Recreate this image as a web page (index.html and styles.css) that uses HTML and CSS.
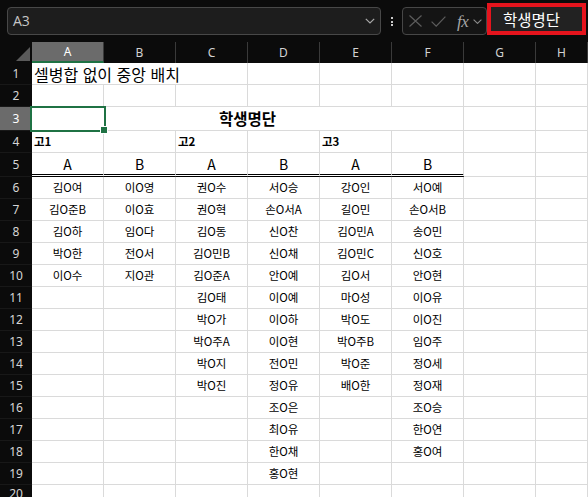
FILE: index.html
```html
<!DOCTYPE html>
<html lang="ko">
<head>
<meta charset="utf-8">
<title>학생명단</title>
<link rel="stylesheet" href="styles.css">
</head>
<body>
<div class="app">
  <div class="fbar">
    <div class="namebox">
      <span class="ref">A3</span>
      <svg class="chev" width="10" height="6" viewBox="0 0 10 6"><path d="M0.8 0.8L5 5 9.2 0.8" fill="none" stroke="#a9a9a9" stroke-width="1.2"/></svg>
    </div>
    <div class="kebab"><i></i><i></i><i></i></div>
    <div class="fxbox">
      <svg class="ic-x" width="13" height="12" viewBox="0 0 13 12"><path d="M0.5 0.5L12.5 11.5M12.5 0.5L0.5 11.5" stroke="#5c5c5c" stroke-width="1.2" fill="none"/></svg>
      <svg class="ic-ok" width="15" height="11" viewBox="0 0 15 11"><path d="M0.6 5.6L5.2 10.2 14.4 0.6" stroke="#5c5c5c" stroke-width="1.2" fill="none"/></svg>
      <span class="fx">fx</span>
      <svg class="ic-dd" width="9" height="5" viewBox="0 0 9 5"><path d="M0.6 0.6L4.5 4.4 8.4 0.6" stroke="#8a8a8a" stroke-width="1.1" fill="none"/></svg>
    </div>
    <div class="finput">학생명단</div>
  </div>

  <div class="sheet">
    <div class="row hdr">
      <div class="corner"><svg width="14" height="14" viewBox="0 0 14 14"><path d="M14 0V14H0Z" fill="#5a5a5a"/></svg></div>
      <div class="ch sel">A</div><div class="ch">B</div><div class="ch">C</div><div class="ch">D</div><div class="ch">E</div><div class="ch">F</div><div class="ch">G</div><div class="ch">H</div>
    </div>

    <div class="row">
      <div class="rh">1</div>
      <div class="c note">셀병합 없이 중앙 배치</div><div class="c"></div><div class="c"></div><div class="c"></div><div class="c"></div><div class="c"></div>
    </div>
    <div class="row">
      <div class="rh">2</div>
      <div class="c"></div><div class="c"></div><div class="c"></div><div class="c"></div><div class="c"></div><div class="c"></div><div class="c"></div><div class="c"></div>
    </div>
    <div class="row tall">
      <div class="rh sel">3</div>
      <div class="c title">학생명단</div>
      <div class="selbox"></div>
      <div class="c"></div><div class="c"></div>
    </div>
    <div class="row">
      <div class="rh">4</div>
      <div class="c grade">고1</div><div class="c"></div><div class="c grade">고2</div><div class="c"></div><div class="c grade">고3</div><div class="c"></div><div class="c"></div><div class="c"></div>
    </div>
    <div class="row tall">
      <div class="rh">5</div>
      <div class="c cls dbl">A</div><div class="c cls dbl">B</div><div class="c cls dbl">A</div><div class="c cls dbl">B</div><div class="c cls dbl">A</div><div class="c cls dbl">B</div><div class="c"></div><div class="c"></div>
    </div>

    <div class="row"><div class="rh">6</div><div class="c">김O여</div><div class="c">이O영</div><div class="c">권O수</div><div class="c">서O승</div><div class="c">강O인</div><div class="c">서O예</div><div class="c"></div><div class="c"></div></div>
    <div class="row"><div class="rh">7</div><div class="c">김O준B</div><div class="c">이O효</div><div class="c">권O혁</div><div class="c">손O서A</div><div class="c">길O민</div><div class="c">손O서B</div><div class="c"></div><div class="c"></div></div>
    <div class="row"><div class="rh">8</div><div class="c">김O하</div><div class="c">임O다</div><div class="c">김O동</div><div class="c">신O찬</div><div class="c">김O민A</div><div class="c">송O민</div><div class="c"></div><div class="c"></div></div>
    <div class="row"><div class="rh">9</div><div class="c">박O한</div><div class="c">전O서</div><div class="c">김O민B</div><div class="c">신O채</div><div class="c">김O민C</div><div class="c">신O호</div><div class="c"></div><div class="c"></div></div>
    <div class="row"><div class="rh">10</div><div class="c">이O수</div><div class="c">지O관</div><div class="c">김O준A</div><div class="c">안O예</div><div class="c">김O서</div><div class="c">안O현</div><div class="c"></div><div class="c"></div></div>
    <div class="row"><div class="rh">11</div><div class="c"></div><div class="c"></div><div class="c">김O태</div><div class="c">이O예</div><div class="c">마O성</div><div class="c">이O유</div><div class="c"></div><div class="c"></div></div>
    <div class="row"><div class="rh">12</div><div class="c"></div><div class="c"></div><div class="c">박O가</div><div class="c">이O하</div><div class="c">박O도</div><div class="c">이O진</div><div class="c"></div><div class="c"></div></div>
    <div class="row"><div class="rh">13</div><div class="c"></div><div class="c"></div><div class="c">박O주A</div><div class="c">이O현</div><div class="c">박O주B</div><div class="c">임O주</div><div class="c"></div><div class="c"></div></div>
    <div class="row"><div class="rh">14</div><div class="c"></div><div class="c"></div><div class="c">박O지</div><div class="c">전O민</div><div class="c">박O준</div><div class="c">정O세</div><div class="c"></div><div class="c"></div></div>
    <div class="row"><div class="rh">15</div><div class="c"></div><div class="c"></div><div class="c">박O진</div><div class="c">정O유</div><div class="c">배O한</div><div class="c">정O재</div><div class="c"></div><div class="c"></div></div>
    <div class="row"><div class="rh">16</div><div class="c"></div><div class="c"></div><div class="c"></div><div class="c">조O은</div><div class="c"></div><div class="c">조O승</div><div class="c"></div><div class="c"></div></div>
    <div class="row"><div class="rh">17</div><div class="c"></div><div class="c"></div><div class="c"></div><div class="c">최O유</div><div class="c"></div><div class="c">한O연</div><div class="c"></div><div class="c"></div></div>
    <div class="row"><div class="rh">18</div><div class="c"></div><div class="c"></div><div class="c"></div><div class="c">한O채</div><div class="c"></div><div class="c">홍O여</div><div class="c"></div><div class="c"></div></div>
    <div class="row"><div class="rh">19</div><div class="c"></div><div class="c"></div><div class="c"></div><div class="c">홍O현</div><div class="c"></div><div class="c"></div><div class="c"></div><div class="c"></div></div>
    <div class="row last"><div class="rh">20</div><div class="c"></div><div class="c"></div><div class="c"></div><div class="c"></div><div class="c"></div><div class="c"></div><div class="c"></div><div class="c"></div></div>
  </div>
</div>
</body>
</html>
```

FILE: styles.css
```css
* { box-sizing: border-box; margin: 0; padding: 0; }

html, body {
  width: 588px;
  height: 497px;
  overflow: hidden;
  background: #0b0b0b;
}

body {
  font-family: "Noto Sans CJK KR", "Noto Sans", sans-serif;
}

.app {
  width: 588px;
  height: 497px;
  overflow: hidden;
}

/* ---------- formula bar ---------- */
.fbar {
  height: 42px;
  display: flex;
  align-items: flex-start;
  padding-left: 7px;
  background: #0b0b0b;
}

.namebox {
  margin-top: 7px;
  width: 374px;
  height: 28px;
  border: 1px solid #484848;
  border-radius: 4px;
  background: #1d1d1d;
  display: flex;
  align-items: center;
  justify-content: space-between;
  padding: 0 5px 0 5px;
}

.ref {
  color: #c6c6c6;
  font-family: "Open Sans", "Noto Sans", sans-serif;
  font-size: 14px;
  line-height: 1;
}

.kebab {
  margin: 17px 0 0 10px;
  width: 2px;
  display: flex;
  flex-direction: column;
  gap: 1.5px;
}

.kebab i {
  display: block;
  width: 2px;
  height: 2px;
  background: #c9c9c9;
}

.fxbox {
  margin: 7px 0 0 9px;
  width: 85px;
  height: 28px;
  border: 1px solid #474747;
  border-radius: 4px;
  background: #141414;
  display: flex;
  align-items: center;
}

.ic-x { margin-left: 6px; }
.ic-ok { margin-left: 9px; }

.fx {
  margin-left: 11px;
  color: #a6a6a6;
  font-family: "Liberation Serif", "DejaVu Serif", serif;
  font-style: italic;
  font-size: 17px;
  line-height: 1;
  letter-spacing: -0.5px;
}

.ic-dd { margin-left: 5px; }

.finput {
  margin-top: 3px;
  width: 99px;
  height: 32px;
  border: 4px solid #e5141d;
  background: #222222;
  color: #ffffff;
  font-size: 15.5px;
  line-height: 24px;
  padding-left: 12px;
  white-space: nowrap;
}

/* ---------- sheet ---------- */
.row {
  display: grid;
  grid-template-columns: 32px repeat(7, 72px) 52px;
  height: 22px;
}

.row.hdr { height: 21px; }
.row.tall { height: 24px; }
.row.last { height: 12px; overflow: hidden; }

.corner {
  background: #0b0b0b;
  display: flex;
  align-items: flex-end;
  justify-content: flex-end;
  padding: 0 2px 2px 0;
}

.ch {
  background: #0b0b0b;
  border-right: 1px solid #3a3a3a;
  color: #d2d2d2;
  font-family: "Noto Sans", "Open Sans", sans-serif;
  font-size: 12px;
  display: flex;
  align-items: center;
  justify-content: center;
}

.ch.sel {
  background: #6b6b6b;
  color: #ffffff;
  border-bottom: 2px solid #1f7244;
}

.rh {
  background: #0b0b0b;
  border-bottom: 1px solid #181818;
  color: #d6d6d6;
  font-family: "Noto Sans", "Open Sans", sans-serif;
  font-size: 12px;
  display: flex;
  align-items: center;
  justify-content: center;
}

.rh.sel {
  background: #6b6b6b;
  color: #ffffff;
}

.c {
  background: #ffffff;
  border-right: 1px solid #dadada;
  border-bottom: 1px solid #dadada;
  color: #000000;
  font-size: 11.5px;
  line-height: 1;
  display: flex;
  align-items: center;
  justify-content: center;
  white-space: nowrap;
}

.c.note {
  grid-column: span 3;
  justify-content: flex-start;
  padding-left: 2px;
  font-size: 16px;
}

.c.title {
  grid-column: 2 / 8;
  grid-row: 1;
  font-size: 15.5px;
  font-weight: 700;
}

.selbox {
  grid-column: 2;
  grid-row: 1;
  margin: -1px -2px -1px -2px;
  border: 2px solid #1f7244;
  position: relative;
  z-index: 2;
}

.selbox::after {
  content: "";
  position: absolute;
  right: -4px;
  bottom: -4px;
  width: 6px;
  height: 6px;
  background: #1f7244;
  border: 1px solid #ffffff;
}

.c.grade {
  justify-content: flex-start;
  padding-left: 2px;
  font-size: 11.5px;
  font-weight: 700;
}

.c.cls {
  font-size: 14px;
}

.c.dbl {
  border-bottom: 3px double #000000;
}
```
